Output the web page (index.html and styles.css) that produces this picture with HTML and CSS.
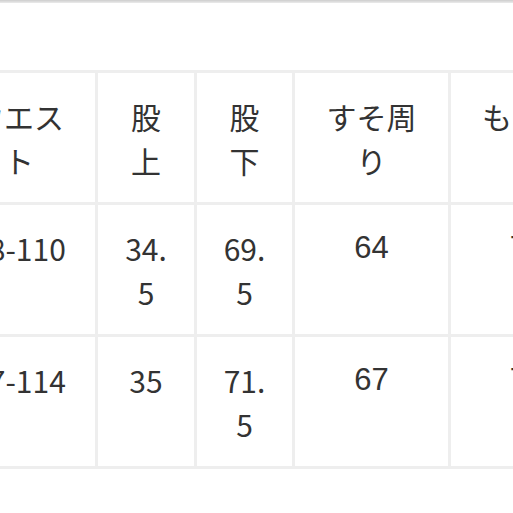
FILE: index.html
```html
<!DOCTYPE html>
<html lang="ja">
<head>
<meta charset="utf-8">
<link rel="stylesheet" href="styles.css">
</head>
<body>
<div class="topbar"></div>
<div class="viewport">
  <div class="size-table">
    <div class="cell head">ウエスト</div>
    <div class="cell head">股上</div>
    <div class="cell head">股下</div>
    <div class="cell head">すそ周り</div>
    <div class="cell head">もも周り</div>

    <div class="cell">98-110</div>
    <div class="cell">34.5</div>
    <div class="cell">69.5</div>
    <div class="cell latin">64</div>
    <div class="cell latin">72</div>

    <div class="cell">97-114</div>
    <div class="cell">35</div>
    <div class="cell">71.5</div>
    <div class="cell latin">67</div>
    <div class="cell latin">75</div>
  </div>
</div>
</body>
</html>
```
FILE: styles.css
```css
html, body {
  margin: 0;
  padding: 0;
  background: #ffffff;
}
body {
  width: 513px;
  height: 513px;
  overflow: hidden;
  font-family: "Noto Sans CJK JP", "Noto Sans", sans-serif;
  color: #333333;
}
.topbar {
  height: 3px;
  background: linear-gradient(#cdcdcd, #ebebeb);
}
.viewport {
  overflow: hidden;
  padding-top: 67px;
}
.size-table {
  display: grid;
  grid-template-columns: 152px 96px 95px 153px 152px;
  gap: 3px;
  padding: 3px;
  background: #eeeeee;
  width: max-content;
  margin-left: -60px;
}
.cell {
  background: #ffffff;
  padding: 21px 23px 20px;
  font-size: 30px;
  line-height: 44px;
  text-align: center;
  overflow-wrap: anywhere;
  word-break: break-all;
}
.cell.latin {
  font-family: "Liberation Sans", Arial, sans-serif;
  font-size: 31px;
}
```
